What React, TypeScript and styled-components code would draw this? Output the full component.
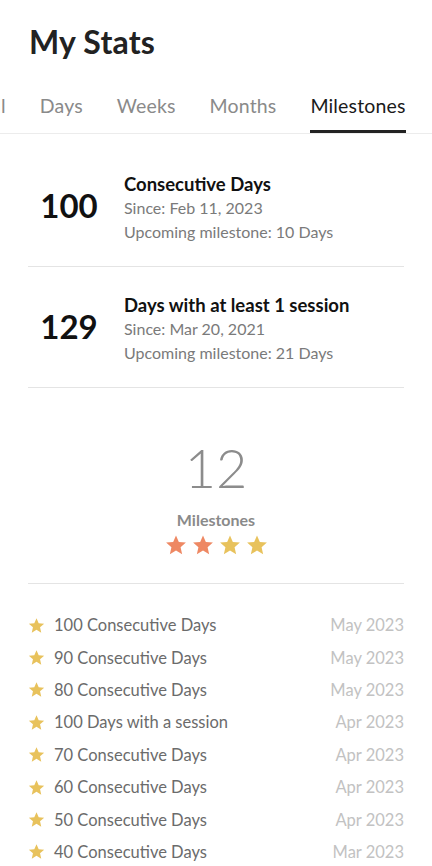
import React from 'react';
import styled, { createGlobalStyle } from 'styled-components';

const GlobalStyle = createGlobalStyle`
  html, body {
    margin: 0;
    padding: 0;
    background: #fff;
  }
  body {
    font-family: Lato, "Noto Sans", "Liberation Sans", sans-serif;
    -webkit-font-smoothing: antialiased;
  }
`;

const Page = styled.div`
  width: 432px;
  height: 866px;
  overflow: hidden;
  background: #fff;
`;

const Title = styled.h1`
  margin: 0;
  padding: 23px 0 0 29px;
  font-size: 32px;
  font-weight: 700;
  color: #222;
  line-height: 38px;
  letter-spacing: 0.2px;
`;

const TabBar = styled.div`
  margin-top: 33px;
  border-bottom: 1px solid #ececec;
  overflow: hidden;
`;

const TabTrack = styled.div`
  display: flex;
  gap: 34px;
  margin-left: -17px;
`;

const Tab = styled.div<{ active?: boolean }>`
  flex: none;
  font-size: 19.5px;
  letter-spacing: 0.15px;
  line-height: 24px;
  padding-bottom: 12px;
  color: ${({ active }) => (active ? '#1a1a1a' : '#8a8a8a')};
  border-bottom: 3px solid ${({ active }) => (active ? '#222' : 'transparent')};
`;

const Content = styled.div`
  padding: 0 28px;
`;

const StatRow = styled.div<{ first?: boolean }>`
  display: flex;
  align-items: center;
  padding: ${({ first }) => (first ? '39px 0 23px' : '27px 0 23px')};
  border-bottom: 1px solid #e4e4e4;
`;

const StatNumber = styled.div`
  width: 82px;
  margin-right: 14px;
  text-align: center;
  font-size: 33px;
  font-weight: 700;
  color: #111;
  padding-bottom: 6px;
`;

const StatInfo = styled.div`
  display: flex;
  flex-direction: column;
`;

const StatTitle = styled.div`
  font-size: 18.5px;
  font-weight: 700;
  color: #111;
  line-height: 23px;
`;

const StatSub = styled.div`
  font-size: 16px;
  color: #7a7a7a;
  line-height: 23.5px;
`;

const Summary = styled.div`
  display: flex;
  flex-direction: column;
  align-items: center;
  padding: 50px 0 27px;
  border-bottom: 1px solid #e4e4e4;
`;

const BigCount = styled.div`
  font-size: 54px;
  font-weight: 300;
  color: #8c8c8c;
  line-height: 60px;
`;

const SummaryLabel = styled.div`
  margin-top: 12px;
  font-size: 16px;
  font-weight: 700;
  color: #8a8a8a;
  line-height: 20px;
`;

const Stars = styled.div`
  display: flex;
  gap: 5px;
  margin-top: 4px;
`;

const List = styled.div`
  padding-top: 25px;
`;

const ListRow = styled.div`
  display: flex;
  align-items: center;
  height: 32.4px;
`;

const RowStar = styled.div`
  width: 26px;
  display: flex;
  align-items: center;
`;

const RowText = styled.div`
  flex: 1;
  font-size: 16.5px;
  color: #6b6b6b;
`;

const RowDate = styled.div`
  font-size: 16.5px;
  color: #c2c2c2;
`;

const StarIcon = ({ size, color }: { size: number; color: string }) => (
  <svg width={size} height={size} viewBox="0 0 24 24">
    <path
      d="M12 1.6l3.1 7.1 7.7.7-5.8 5.1 1.7 7.6L12 18.1l-6.7 4 1.7-7.6-5.8-5.1 7.7-.7z"
      fill={color}
    />
  </svg>
);

const stats = [
  { value: '100', title: 'Consecutive Days', since: 'Feb 11, 2023', next: '10 Days' },
  { value: '129', title: 'Days with at least 1 session', since: 'Mar 20, 2021', next: '21 Days' },
];

const milestones = [
  { label: '100 Consecutive Days', date: 'May 2023' },
  { label: '90 Consecutive Days', date: 'May 2023' },
  { label: '80 Consecutive Days', date: 'May 2023' },
  { label: '100 Days with a session', date: 'Apr 2023' },
  { label: '70 Consecutive Days', date: 'Apr 2023' },
  { label: '60 Consecutive Days', date: 'Apr 2023' },
  { label: '50 Consecutive Days', date: 'Apr 2023' },
  { label: '40 Consecutive Days', date: 'Mar 2023' },
];

const starColors = ['#ee8863', '#ee8863', '#e8c25c', '#e8c25c'];

const tabs = ['All', 'Days', 'Weeks', 'Months', 'Milestones'];

export default function App() {
  return (
    <Page>
      <GlobalStyle />
      <Title>My Stats</Title>
      <TabBar>
        <TabTrack>
          {tabs.map((t) => (
            <Tab key={t} active={t === 'Milestones'}>
              {t}
            </Tab>
          ))}
        </TabTrack>
      </TabBar>
      <Content>
        {stats.map((s, i) => (
          <StatRow key={s.value} first={i === 0}>
            <StatNumber>{s.value}</StatNumber>
            <StatInfo>
              <StatTitle>{s.title}</StatTitle>
              <StatSub>Since: {s.since}</StatSub>
              <StatSub>Upcoming milestone: {s.next}</StatSub>
            </StatInfo>
          </StatRow>
        ))}
        <Summary>
          <BigCount>12</BigCount>
          <SummaryLabel>Milestones</SummaryLabel>
          <Stars>
            {starColors.map((c, i) => (
              <StarIcon key={i} size={22} color={c} />
            ))}
          </Stars>
        </Summary>
        <List>
          {milestones.map((m) => (
            <ListRow key={m.label}>
              <RowStar>
                <StarIcon size={17} color="#e8c25c" />
              </RowStar>
              <RowText>{m.label}</RowText>
              <RowDate>{m.date}</RowDate>
            </ListRow>
          ))}
        </List>
      </Content>
    </Page>
  );
}
